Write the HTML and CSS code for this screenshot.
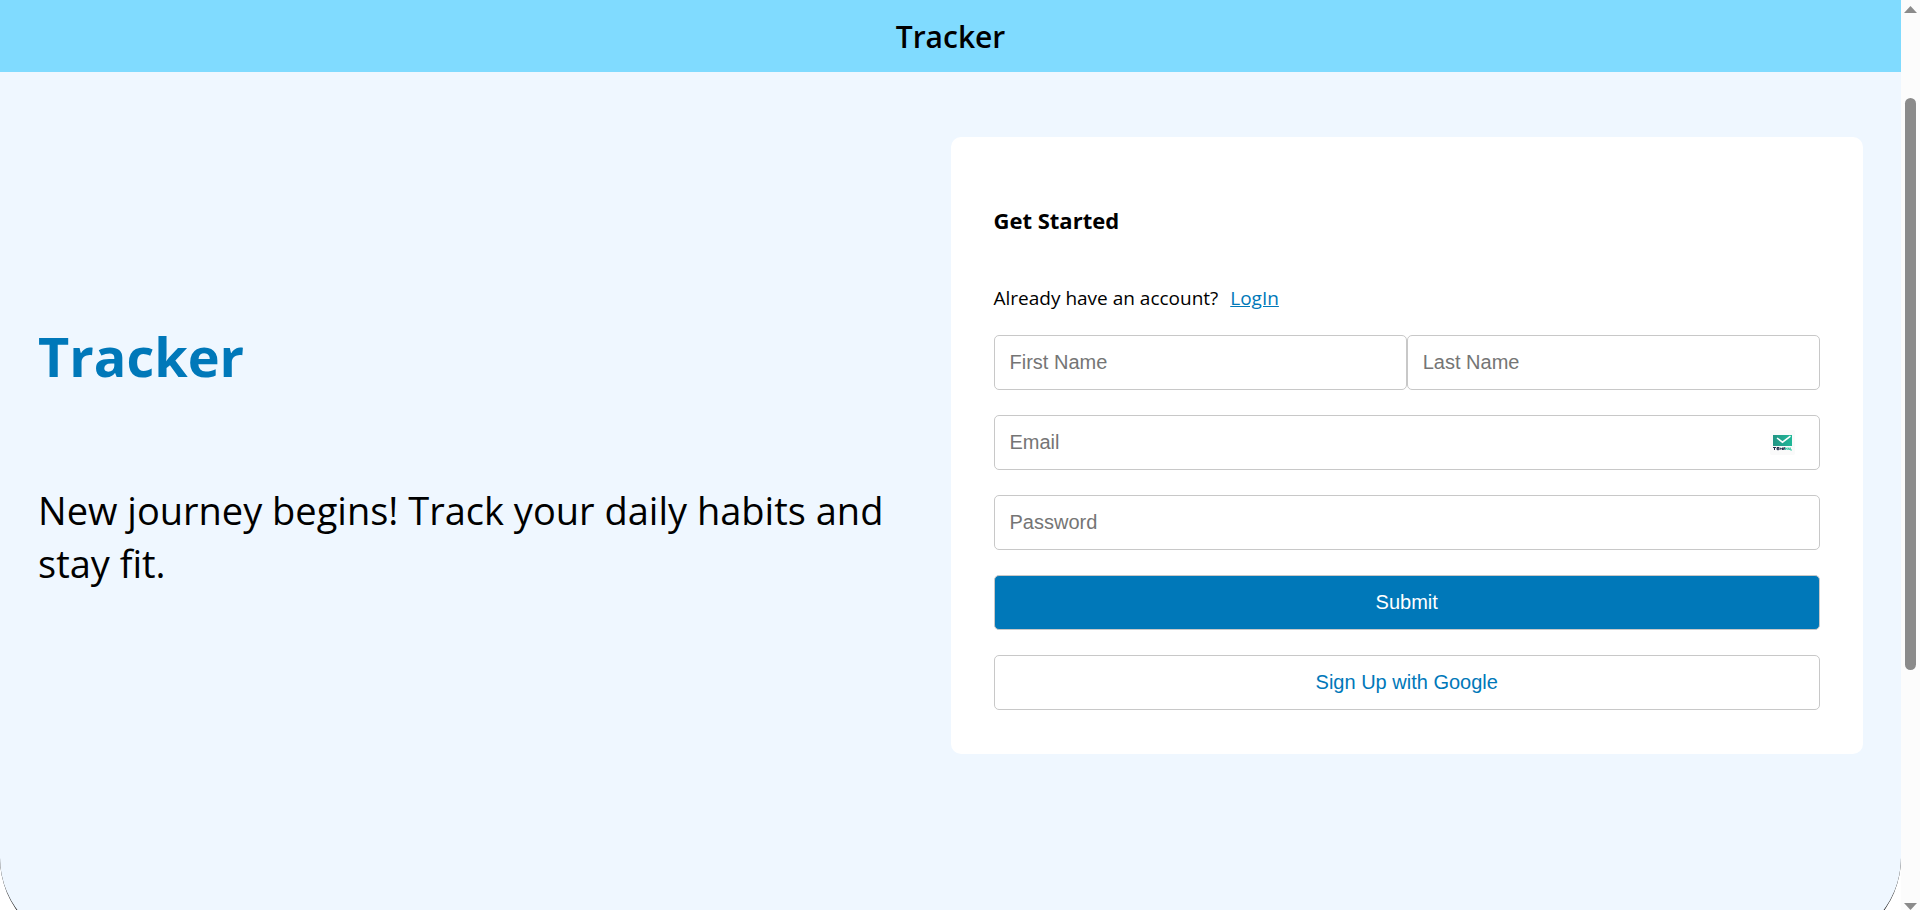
FILE: index.html
```html
<!DOCTYPE html>
<html lang="en">
<head>
<meta charset="utf-8">
<meta name="viewport" content="width=device-width, initial-scale=1">
<title>Tracker</title>
<link rel="stylesheet" href="styles.css">
</head>
<body>
<div class="page">
  <header class="topbar"><p class="brand">Tracker</p></header>
  <main class="hero">
    <section class="intro">
      <h1 class="intro-title">Tracker</h1>
      <p class="intro-text">New journey begins! Track your daily habits and stay fit.</p>
    </section>
    <form class="card">
      <h2 class="card-title">Get Started</h2>
      <p class="login">Already have an account? <a class="login-link" href="#login">LogIn</a></p>
      <div class="fields">
        <div class="names">
          <input class="field" type="text" placeholder="First Name" aria-label="First Name">
          <input class="field" type="text" placeholder="Last Name" aria-label="Last Name">
        </div>
        <div class="email">
          <input class="field" type="email" placeholder="Email" aria-label="Email">
          <svg class="mail-icon" viewBox="0 0 25 25" aria-hidden="true">
            <defs>
              <linearGradient id="mail" x1="0" y1="0" x2="1" y2="0">
                <stop offset="0" stop-color="#219484"/><stop offset="1" stop-color="#20b898"/>
              </linearGradient>
            </defs>
            <rect width="25" height="25" rx="2" fill="#fafafa"/>
            <path d="M3 5H22V16H3Z" fill="url(#mail)"/>
            <path d="M7 8l5.500 4.200L20.500 6.200" fill="none" stroke="#fff" stroke-width="1.500"/>
            <path d="M3 17.500h3M4.500 17.500v2.500M9 17.500H7v2.200h2M7 18.700h2M10 20v-2.300l1.300 1.500 1.200-1.500V20" fill="none" stroke="#26334f"/>
            <path d="M13.700 20v-2.300h1.200v1.300h-1" fill="none" stroke="#26334f"/>
            <path d="M15.500 20v-2.300l.8 1.200.8-1.200V20M18 20l.8-2.300.8 2.300M20.300 17.500V20H22" fill="none" stroke="#3fc9a8"/>
          </svg>
        </div>
        <input class="field" type="password" placeholder="Password" aria-label="Password">
        <button class="button button-primary" type="submit">Submit</button>
        <button class="button" type="button">Sign Up with Google</button>
      </div>
    </form>
  </main>
</div>
<div class="scrollbar" aria-hidden="true">
  <svg class="arrow" viewBox="0 0 13 7"><path d="M0 7L6.500 0L13 7Z"/></svg>
  <div class="track"><div class="thumb"></div></div>
  <svg class="arrow" viewBox="0 0 13 7"><path d="M0 0L6.500 7L13 0Z"/></svg>
</div>
</body>
</html>
```
FILE: styles.css
```css
* { box-sizing: border-box; }

body {
  display: flex;
  height: 100vh;
  margin: 0;
  overflow: hidden;
  background: #fff;
  color: #000;
  font-family: "Segoe UI", "Open Sans", sans-serif;
  font-size: 19px;
}

h1, h2, p { margin: 0; }

.page { flex: 1; min-width: 0; }

.topbar {
  display: flex;
  align-items: center;
  justify-content: center;
  height: 72px;
  background: #80dbff;
}

.brand { font-size: 30px; font-weight: 600; }

.hero {
  display: grid;
  grid-template-columns: minmax(0, 1fr) minmax(0, 1fr);
  align-items: start;
  padding: 65px 2% 192px;
  background: #eff7ff;
  border-bottom: 2px solid #000;
  border-radius: 0 0 90px 90px;
}

.intro {
  display: flex;
  flex-direction: column;
  align-self: center;
  gap: 88px;
  padding-top: 14px;
}

.intro-title {
  color: #0078b9;
  font-size: 54px;
  line-height: 80px;
}

.intro-text {
  font-size: 38px;
  line-height: 53px;
}

.card {
  padding: 67px 43px 44px;
  background: #fff;
  border-radius: 10px;
}

.card-title { font-size: 22px; line-height: 32px; }

.login { margin-top: 49px; line-height: 26px; }

.login-link { margin-left: 7px; color: #0078b9; }

.fields {
  display: flex;
  flex-direction: column;
  gap: 25px;
  margin-top: 24px;
}

.names { display: flex; }

.field, .button {
  width: 100%;
  height: 55px;
  padding: 0 15px;
  border: 1px solid #c8c8c8;
  border-radius: 5px;
  background: #fff;
  font-family: "Liberation Sans", Arial, sans-serif;
  font-size: 20px;
}

.field::placeholder { color: #757575; }

.email { position: relative; }

.mail-icon {
  position: absolute;
  top: 15px;
  right: 25px;
  width: 25px;
  height: 25px;
}

.button { color: #0078b9; }

.button-primary { background: #0078b9; color: #fff; }

.scrollbar {
  display: flex;
  flex-direction: column;
  align-items: center;
  width: 19px;
  padding-top: 6px;
  background: #fcfcfc;
}

.arrow {
  flex: none;
  width: 13px;
  height: 7px;
  fill: #8b8b8b;
}

.track {
  display: grid;
  flex: 1;
  grid-template-rows: 85fr 572fr 233fr;
}

.thumb {
  grid-row: 2;
  width: 11px;
  border-radius: 6px;
  background: #8b8b8b;
}
```
